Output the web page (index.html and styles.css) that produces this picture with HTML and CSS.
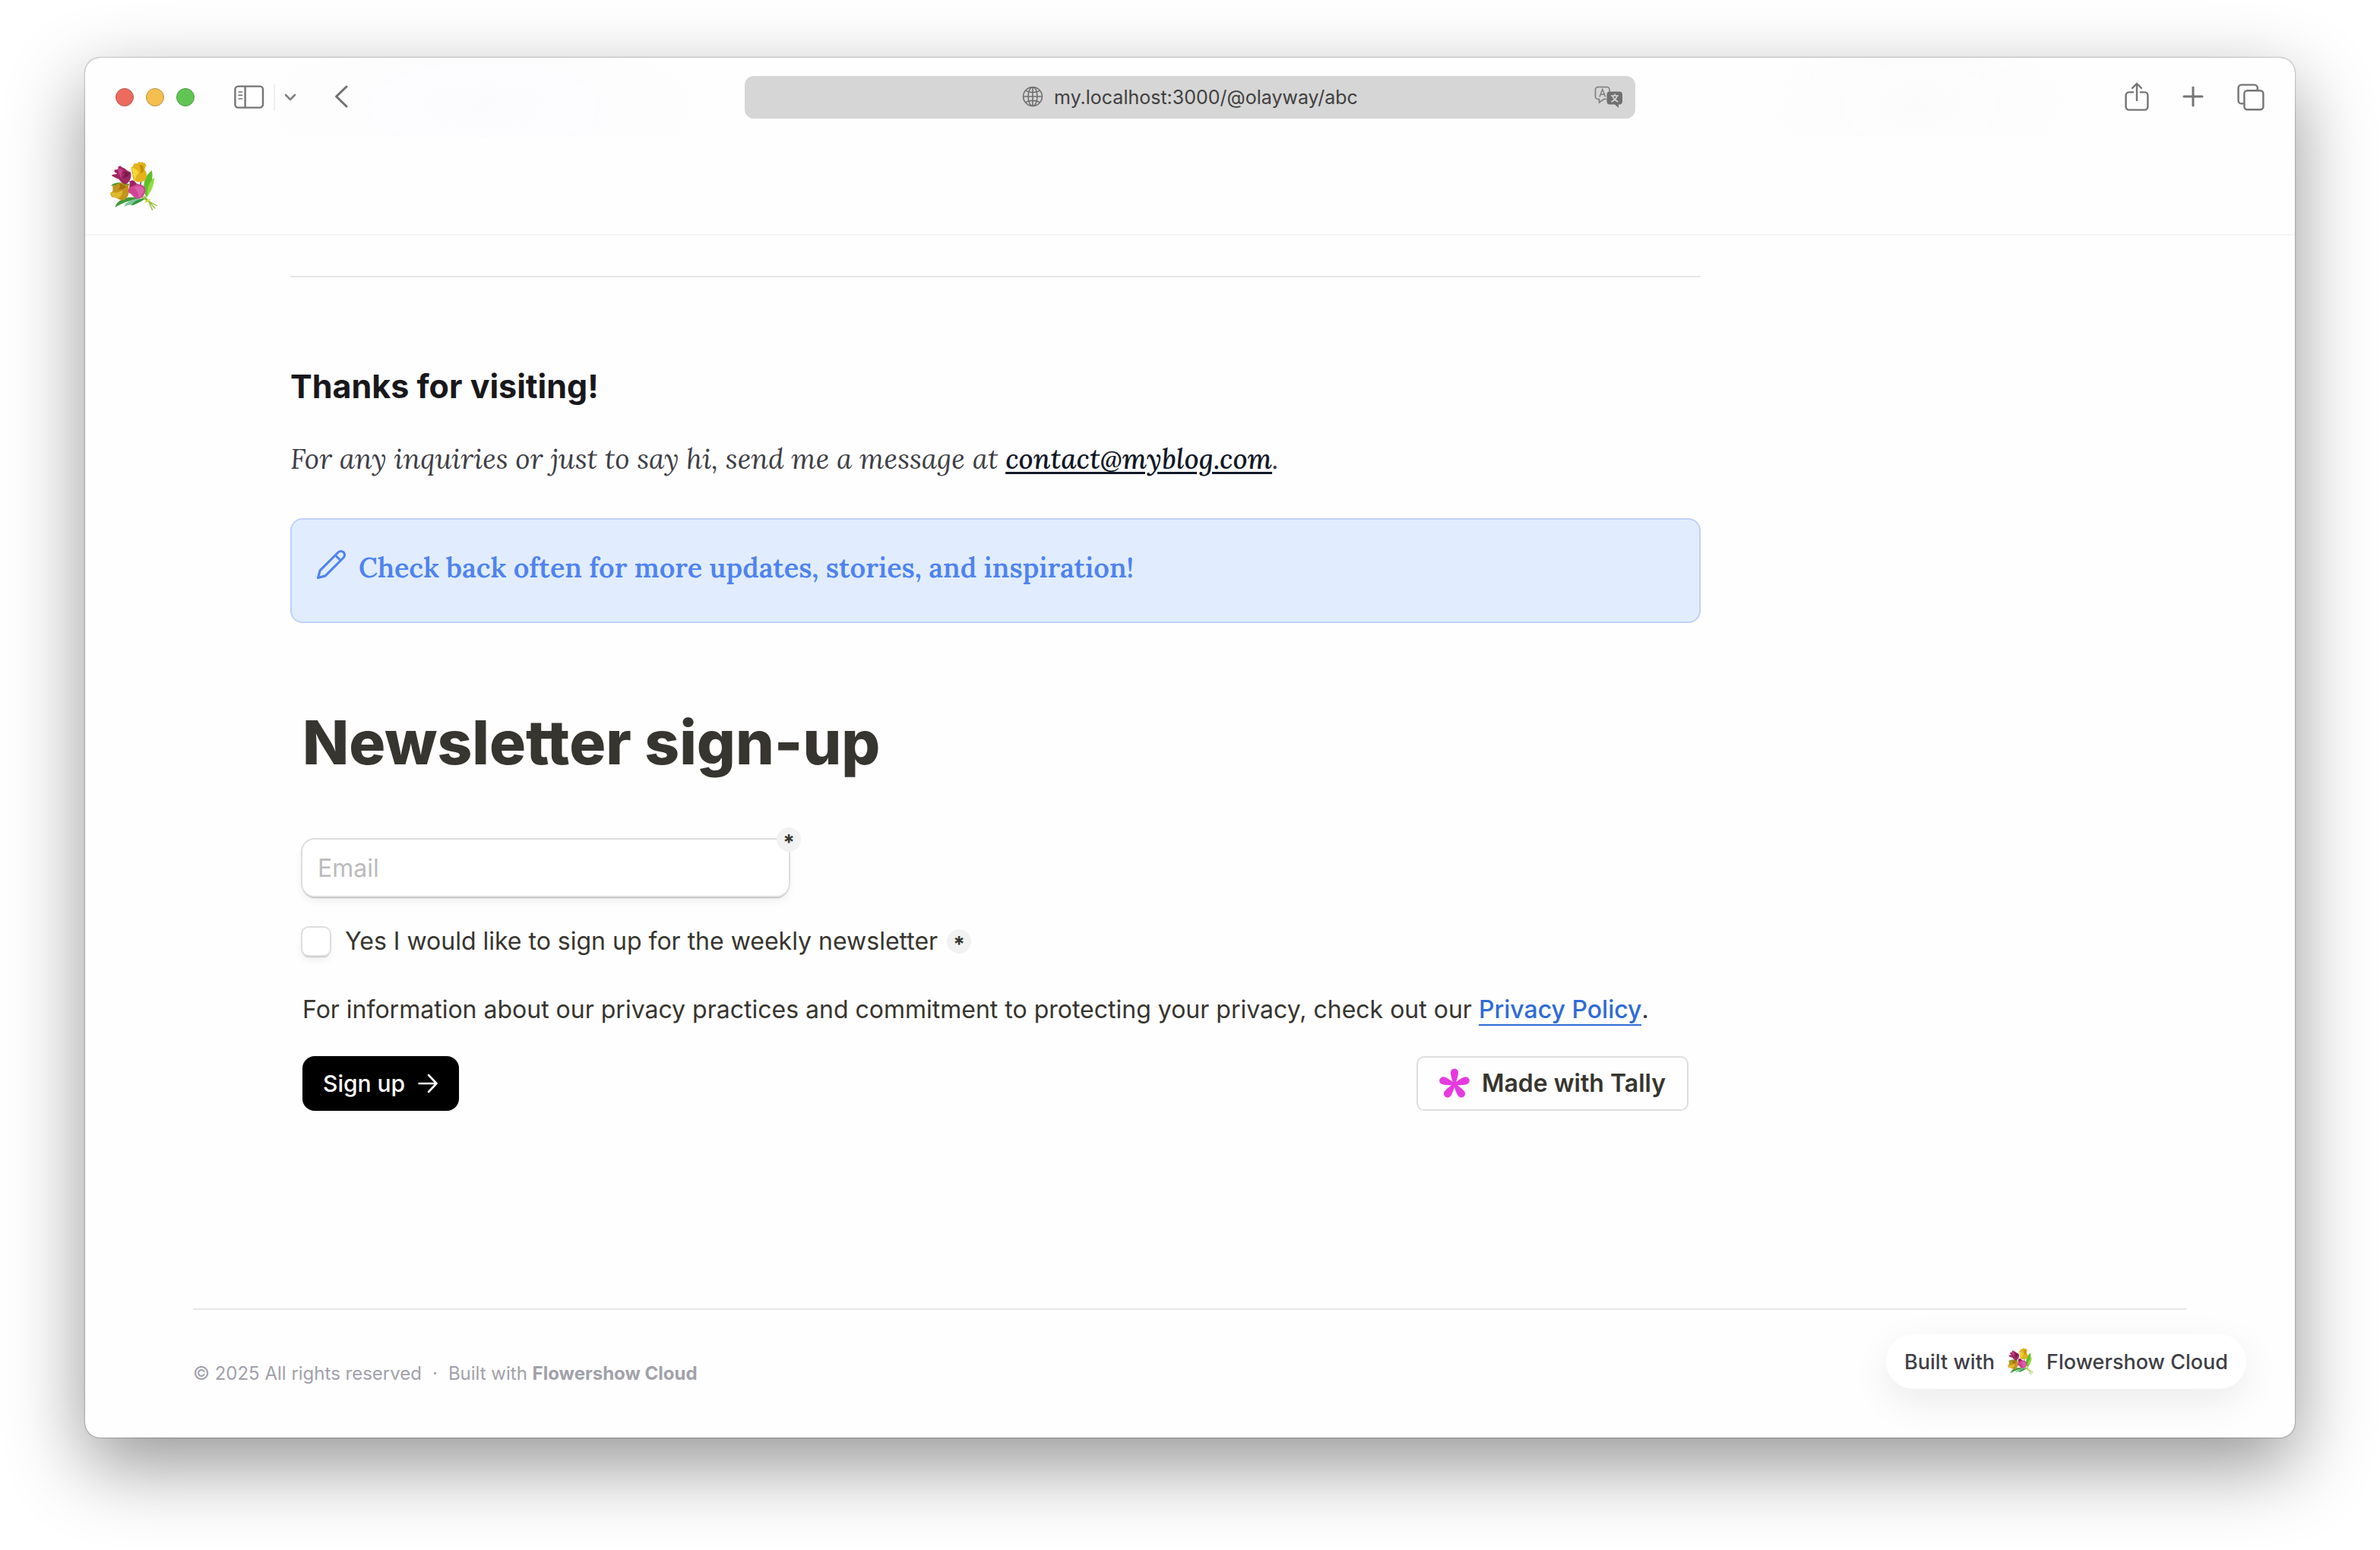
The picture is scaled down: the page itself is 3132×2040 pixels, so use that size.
FILE: index.html
```html
<!DOCTYPE html>
<html lang="en">
<head>
<meta charset="utf-8">
<meta name="viewport" content="width=device-width, initial-scale=1">
<title>my.localhost:3000/@olayway/abc</title>
<link rel="stylesheet" href="styles.css">
</head>
<body>
<svg width="0" height="0" class="defs" aria-hidden="true">
  <symbol id="bouquet" viewBox="44 64 188 194">
    <path fill="#4f9a2c" d="M50 160C58 146 88 142 122 154L110 168C88 158 66 160 50 160Z"/>
    <path fill="#3f9a35" d="M66 243C72 220 98 202 140 204L160 212C126 214 96 226 66 243Z"/>
    <path fill="#7cc79a" d="M100 240C108 222 130 210 166 208C160 222 146 228 136 236C132 230 112 234 100 240Z"/>
    <path fill="#2f9a3c" d="M128 236C138 220 154 212 184 206C172 220 152 228 128 236Z"/>
    <path fill="#5fbf2a" d="M178 152C180 130 192 112 208 101C214 128 206 176 188 204C178 190 174 172 178 152Z"/>
    <path fill="#8fdc3f" d="M218 128C216 158 206 180 190 202C188 176 196 144 218 128Z"/>
    <path fill="none" stroke="#2c5d24" stroke-width="4" d="M122 142L136 160M166 142L164 158"/>
    <g fill="none" stroke="#8dbb34" stroke-width="4" stroke-linecap="round">
      <path d="M164 202L192 218L227 236"/><path d="M172 200L196 220L220 246"/><path d="M180 200L196 220L210 253"/>
    </g>
    <path fill="none" stroke="#d6dc43" stroke-width="6" stroke-linecap="round" d="M184 222L200 214"/>
    <path fill="#a02660" d="M52 120C60 112 70 118 74 112C66 110 60 104 64 98C72 96 76 98 78 92C76 84 82 82 88 84C92 90 100 90 108 96C112 102 120 102 126 108C132 124 122 150 104 154C92 150 84 138 78 132C70 132 62 126 52 120Z"/>
    <path fill="#c43f8a" d="M76 96C84 90 92 94 96 102C90 108 88 118 92 128C82 122 80 108 76 96Z"/>
    <path fill="#7c1848" d="M98 104C108 102 114 108 122 110C118 122 112 126 96 130C104 120 104 112 98 104Z"/>
    <path fill="#e3b21c" d="M126 88C134 90 138 80 138 74C146 72 152 76 158 66C162 68 168 72 170 68C178 70 186 74 186 82C182 88 182 92 180 98C190 108 192 126 182 138C168 148 148 146 138 138C132 128 134 106 126 88Z"/>
    <path fill="#f5d838" d="M130 90C140 90 150 96 158 110C150 116 144 126 144 138C134 126 136 104 130 90Z"/>
    <path fill="#c58c0c" d="M160 80C170 76 176 82 176 92C180 104 172 110 162 112C170 100 164 92 160 80Z"/>
    <path fill="#c4941a" d="M56 160C70 160 72 150 84 150C92 146 100 152 104 156C114 152 120 156 118 166C122 186 118 206 98 216C86 216 76 208 64 204C54 206 46 198 48 186C58 186 58 174 56 160Z"/>
    <path fill="#dfb92e" d="M58 184C72 190 80 182 96 178C94 192 88 204 78 208C66 206 54 204 48 190Z"/>
    <path fill="#a3700e" d="M82 152C92 150 102 160 110 162C104 172 94 174 78 174C86 166 86 160 82 152Z"/>
    <path fill="#cf4394" d="M118 172C124 164 120 152 124 142C132 136 140 140 146 148C156 156 176 154 182 168C186 186 176 206 156 210C142 210 132 196 126 190C118 190 116 182 118 172Z"/>
    <path fill="#98245c" d="M124 144C132 134 142 140 148 152C142 160 132 160 122 166Z"/>
    <path fill="#da60a8" d="M140 166C154 158 170 160 178 172C178 190 166 204 156 206C158 190 150 176 140 166Z"/>
  </symbol>
</svg>

<div class="window">
  <div class="toolbar">
    <div class="tools tools-left">
      <div class="lights"><span class="light red"></span><span class="light yellow"></span><span class="light green"></span></div>
      <button class="tool sidebar" aria-label="Show sidebar">
        <svg width="40" height="32" viewBox="0 0 40 32" fill="none" stroke="#747474" stroke-width="2.4"><rect x="1.4" y="1.6" width="36.6" height="28" rx="4"/><path d="M14.6 2v27"/><path stroke-width="1.6" stroke-linecap="round" d="M6 9h4.6M6 13.4h4.6M6 18h4.6"/></svg>
      </button>
      <button class="tool chevron" aria-label="Tab groups">
        <svg width="16" height="12" viewBox="0 0 16 12" fill="none" stroke="#808080" stroke-width="2.6" stroke-linecap="round" stroke-linejoin="round"><path d="M2 3l6 6 6-6"/></svg>
      </button>
      <button class="tool" aria-label="Back">
        <svg width="20" height="32" viewBox="0 0 20 32" fill="none" stroke="#707070" stroke-width="3" stroke-linecap="round" stroke-linejoin="round"><path d="M16 2L2.600 15 16 28"/></svg>
      </button>
    </div>
    <div class="address">
      <svg width="28" height="28" viewBox="0 0 28 28" fill="none" stroke="#707070" stroke-width="1.6"><circle cx="14" cy="13" r="12.4"/><ellipse cx="14" cy="13" rx="6" ry="12.400"/><path d="M14 .6v24.800M1.600 13h24.800M4.600 5.400c5.400 3 13.400 3 18.800 0M4.600 20.600c5.400-3 13.400-3 18.800 0"/></svg>
      <span>my.localhost:3000/@olayway/abc</span>
      <button class="tool translate" aria-label="Translate">
        <svg width="38" height="30" viewBox="0 0 38 30"><path d="M16 17.500h-3.500L6.500 22v-4.500H5a3.500 3.500 0 0 1-3.500-3.500V5A3.500 3.500 0 0 1 5 1.500h11.500A3.500 3.500 0 0 1 20 5v2.500" fill="none" stroke="#7c7c7c" stroke-width="1.600"/><path d="M7 14.500L10.800 4.500l3.800 10M8.300 11.200h5" fill="none" stroke="#7c7c7c" stroke-width="1.500"/><path d="M20.500 7.500H33a4 4 0 0 1 4 4v9a4 4 0 0 1-4 4h-1V29L27 24.500h-6.500a4 4 0 0 1-4-4v-9a4 4 0 0 1 4-4z" fill="#707070"/><path d="M22 13h10M27 10.500v2.500M30 13c-1 4-4 6.500-7.500 8M24 13c1 4 4 6.500 7.500 8" fill="none" stroke="#d6d6d6" stroke-width="1.600"/></svg>
      </button>
    </div>
    <div class="tools tools-right">
      <button class="tool" aria-label="Share">
        <svg width="32" height="40" viewBox="0 0 32 40" fill="none" stroke="#747474" stroke-width="2.400" stroke-linecap="round" stroke-linejoin="round"><path d="M11 13.400H5.600a4 4 0 0 0-4 4v15.200a4 4 0 0 0 4 4h20.800a4 4 0 0 0 4-4V17.400a4 4 0 0 0-4-4H21M16 24V3M10 8l6-6 6 6"/></svg>
      </button>
      <button class="tool" aria-label="New tab">
        <svg width="28" height="28" viewBox="0 0 28 28" fill="none" stroke="#747474" stroke-width="3" stroke-linecap="round"><path d="M14 1v24M2 13h24"/></svg>
      </button>
      <button class="tool" aria-label="Show all tabs">
        <svg width="36" height="36" viewBox="0 0 36 36" fill="none" stroke="#747474" stroke-width="2.400"><path d="M9 26.400H5.600a4 4 0 0 1-4-4V5.600a4 4 0 0 1 4-4h17.200a4 4 0 0 1 4 4V9"/><rect x="9.400" y="9.200" width="25" height="25" rx="4"/></svg>
      </button>
    </div>
  </div>

  <header class="site-header">
    <a href="#" aria-label="Home"><svg class="logo" width="64" height="66"><use href="#bouquet"/></svg></a>
  </header>

  <main class="content">
    <hr>
    <h3>Thanks for visiting!</h3>
    <p class="contact"><em>For any inquiries or just to say hi, send me a message at <a href="mailto:contact@myblog.com">contact@myblog.com</a>.</em></p>
    <div class="callout">
      <svg width="42" height="42" viewBox="0 0 24 24" fill="none" stroke="#4f83f0" stroke-width="1.800" stroke-linecap="round" stroke-linejoin="round"><path d="M17 3a2.850 2.830 0 1 1 4 4L7.500 20.500 2 22l1.500-5.500zM15 5l4 4"/></svg>
      <span>Check back often for more updates, stories, and inspiration!</span>
    </div>

    <form class="signup">
      <h1>Newsletter sign-up</h1>
      <div class="field">
        <input class="email" type="email" placeholder="Email" aria-label="Email">
        <span class="required field-mark">*</span>
      </div>
      <div class="consent">
        <input type="checkbox" id="weekly">
        <label for="weekly">Yes I would like to sign up for the weekly newsletter</label>
        <span class="required">*</span>
      </div>
      <p class="privacy">For information about our privacy practices and commitment to protecting your privacy, check out our <a href="#">Privacy Policy</a>.</p>
      <div class="actions">
        <button class="submit" type="submit">Sign up
          <svg width="28" height="28" viewBox="0 0 28 28" fill="none" stroke="#fff" stroke-width="2.600" stroke-linecap="round" stroke-linejoin="round"><path d="M2.500 14h23M15 3l10.500 11L15 25"/></svg>
        </button>
        <a class="tally" href="#">
          <svg width="40" height="40" viewBox="-20 -21 40 40" fill="#e63adf"><path id="petal" d="M0 4C-2-3-5-10-5-15.500a5 5 0 0 1 10 0C5-10 2-3 0 4z"/><use href="#petal" transform="rotate(72)"/><use href="#petal" transform="rotate(144)"/><use href="#petal" transform="rotate(216)"/><use href="#petal" transform="rotate(288)"/></svg>
          Made with Tally
        </a>
      </div>
    </form>
  </main>

  <footer class="site-footer">
    <span>© 2025 All rights reserved</span><span>·</span><span>Built with <a href="#">Flowershow Cloud</a></span>
  </footer>

  <a class="built" href="#">Built with <svg width="36" height="36"><use href="#bouquet"/></svg> Flowershow Cloud</a>
</div>
</body>
</html>
```
FILE: styles.css
```css
* { box-sizing: border-box; }

body {
  margin: 0;
  padding: 76px 112px 148px;
  background: #fff;
  font-family: Inter, "Liberation Sans", sans-serif;
  color: #37352f;
}

h1, h3, p { margin: 0; }
svg { display: block; flex: none; }
.defs { position: absolute; }
button { font: inherit; border: 0; margin: 0; padding: 0; background: none; }

.window {
  position: relative;
  background: #fefefe;
  border-radius: 20px;
  box-shadow: 0 0 2px rgba(0, 0, 0, .6), 0 36px 100px rgba(0, 0, 0, .42);
}

/* Browser toolbar */
.toolbar {
  display: grid;
  grid-template-columns: 1fr minmax(0, 1172px) 1fr;
  align-items: center;
  height: 104px;
  padding: 0 40px;
  border-radius: 20px 20px 0 0;
  background:
    radial-gradient(ellipse 300px 110px at 18% 60%, #fbfbfe, transparent),
    radial-gradient(ellipse 200px 110px at 83% 60%, #fbfbfb, transparent);
}
.tools { display: flex; align-items: center; }
.tools-right { justify-content: flex-end; gap: 44px; }
.lights { display: flex; gap: 16px; }
.light { width: 24px; height: 24px; border-radius: 50%; border: 1px solid; }
.red { background: #ec6a5e; border-color: #b65a50; }
.yellow { background: #f4bf4f; border-color: #b89243; }
.green { background: #61c554; border-color: #4b9a42; }
.sidebar { margin-left: 52px; }
.chevron { margin: 0 50px 0 12px; padding: 12px 0 12px 12px; border-left: 2px solid #f0f0f0; }
.address {
  position: relative;
  display: flex;
  align-items: center;
  justify-content: center;
  gap: 14px;
  height: 56px;
  border-radius: 12px;
  background: #d6d6d6;
  color: #404040;
  font-size: 25px;
}
.translate { position: absolute; right: 16px; }

/* Site */
.site-header {
  height: 130px;
  padding: 32px;
  border-bottom: 2px solid #f4f4f5;
}
.site-header a { display: inline-block; }
.content { max-width: 2126px; padding: 53px 0 260px 270px; }
hr { height: 2px; margin: 0 0 115px; border: 0; background: #e6e6e8; }
h3 { font-size: 43px; line-height: 56px; font-weight: 700; color: #18181b; }
.contact {
  margin-top: 36px;
  font: 37px/64px Lora, "Liberation Serif", serif;
  color: #3f3f46;
}
.contact a { color: #111827; font-weight: 500; text-decoration-thickness: 3px; text-underline-offset: 4px; }
.callout {
  display: flex;
  gap: 15px;
  margin-top: 46px;
  height: 138px;
  padding: 38px 31px;
  border: 2px solid #bfd1fa;
  border-radius: 16px;
  background: #e1edfe;
  color: #4f83f0;
  font: 600 36px/50px Lora, "Liberation Serif", serif;
}

/* Newsletter form */
.signup { padding: 109px 16px 0; font-size: 32px; line-height: 48px; }
h1 { font-size: 80px; line-height: 96px; font-weight: 800; }
.field { position: relative; width: 640px; margin-top: 80px; }
.email {
  display: block;
  width: 100%;
  height: 74px;
  padding: 0 20px;
  border: 0;
  border-radius: 16px;
  background: #fff;
  box-shadow: 0 0 0 2px #dedede, 0 3px 1px #b8b8b8, 0 6px 12px rgba(0, 0, 0, .07);
  font: inherit;
}
.email::placeholder { color: #bbb; opacity: 1; }
.required {
  width: 32px;
  height: 32px;
  border-radius: 50%;
  background: #f2f2f2;
  font-size: 28px;
  line-height: 40px;
  font-weight: 700;
  text-align: center;
}
.field-mark { position: absolute; top: -16px; right: -16px; }
.consent { display: flex; align-items: center; margin-top: 36px; }
.consent input {
  appearance: none;
  width: 36px;
  height: 36px;
  margin: 0;
  border-radius: 8px;
  background: #fff;
  box-shadow: 0 0 0 2px #dedede, 0 3px 1px #c4c4c4, 0 6px 12px rgba(0, 0, 0, .07);
}
.consent label { margin: 0 12px 0 20px; }
.privacy { margin-top: 42px; }
.privacy a { color: #2f6bd6; font-weight: 500; text-decoration: none; border-bottom: 2px solid; }
.actions { display: flex; justify-content: space-between; margin-top: 37px; }
.submit {
  display: flex;
  align-items: center;
  gap: 16px;
  height: 72px;
  padding: 0 27px;
  border-radius: 16px;
  background: #000;
  color: #fff;
  font-size: 30px;
  font-weight: 500;
}
.tally {
  display: flex;
  align-items: center;
  gap: 16px;
  height: 72px;
  padding: 0 28px;
  border: 2px solid #dedede;
  border-radius: 10px;
  color: #37352f;
  font-weight: 600;
  text-decoration: none;
}

/* Footer */
.site-footer {
  display: flex;
  gap: 14px;
  margin: 0 142px;
  padding: 68px 0;
  border-top: 2px solid #e6e6e8;
  color: #a1a1aa;
  font-size: 24px;
  line-height: 32px;
}
.site-footer a { color: inherit; font-weight: 700; text-decoration: none; }
.built {
  position: absolute;
  right: 64px;
  bottom: 64px;
  display: flex;
  align-items: center;
  gap: 16px;
  height: 72px;
  padding: 0 24px;
  border-radius: 36px;
  background: #fff;
  box-shadow: 0 16px 50px rgba(0, 0, 0, .08);
  color: #3f3f46;
  font-size: 27px;
  font-weight: 500;
  text-decoration: none;
}
```
